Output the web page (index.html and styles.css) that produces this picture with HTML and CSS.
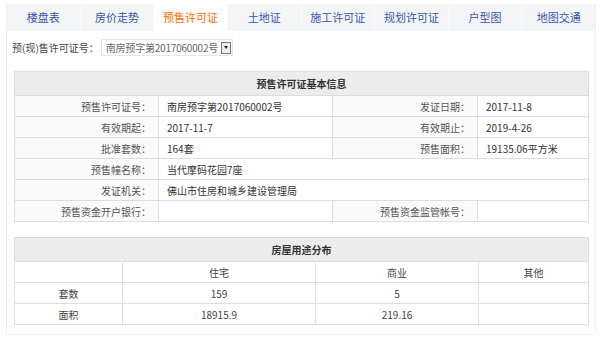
FILE: index.html
```html
<!DOCTYPE html>
<html>
    <head>
        <meta http-equiv="Content-type" content="text/html; charset=utf-8" />
        <link rel="stylesheet" href="styles.css">
        <title>预售许可证</title>
    </head>
    <body>
        <div class="box">
            <div class="tabs">
                <a class="tab">楼盘表</a>
                <a class="tab">房价走势</a>
                <a class="tab active">预售许可证</a>
                <a class="tab">土地证</a>
                <a class="tab">施工许可证</a>
                <a class="tab">规划许可证</a>
                <a class="tab">户型图</a>
                <a class="tab">地图交通</a>
            </div>
            <div class="content">
                <div class="filter">
                    <span class="filterLabel">预(现)售许可证号：</span>
                    <div class="select">
                        <span class="selectText">南房预字第2017060002号</span>
                        <span class="selectBtn"><i class="arrow"></i></span>
                    </div>
                </div>
                <table class="info">
                    <tr>
                        <th colspan="4">预售许可证基本信息</th>
                    </tr>
                    <tr>
                        <td class="lbl w1">预售许可证号：</td>
                        <td class="val w2">南房预字第2017060002号</td>
                        <td class="lbl w3">发证日期：</td>
                        <td class="val">2017-11-8</td>
                    </tr>
                    <tr>
                        <td class="lbl">有效期起：</td>
                        <td class="val">2017-11-7</td>
                        <td class="lbl">有效期止：</td>
                        <td class="val">2019-4-26</td>
                    </tr>
                    <tr>
                        <td class="lbl">批准套数：</td>
                        <td class="val">164套</td>
                        <td class="lbl">预售面积：</td>
                        <td class="val">19135.06平方米</td>
                    </tr>
                    <tr>
                        <td class="lbl">预售幢名称：</td>
                        <td class="val" colspan="3">当代摩码花园7座</td>
                    </tr>
                    <tr>
                        <td class="lbl">发证机关：</td>
                        <td class="val" colspan="3">佛山市住房和城乡建设管理局</td>
                    </tr>
                    <tr>
                        <td class="lbl">预售资金开户银行：</td>
                        <td class="val"></td>
                        <td class="lbl">预售资金监管帐号：</td>
                        <td class="val"></td>
                    </tr>
                </table>
                <table class="info usage">
                    <tr>
                        <th colspan="4">房屋用途分布</th>
                    </tr>
                    <tr>
                        <td class="u1"></td>
                        <td class="u2">住宅</td>
                        <td class="u3">商业</td>
                        <td>其他</td>
                    </tr>
                    <tr>
                        <td>套数</td>
                        <td>159</td>
                        <td>5</td>
                        <td></td>
                    </tr>
                    <tr>
                        <td>面积</td>
                        <td>18915.9</td>
                        <td>219.16</td>
                        <td></td>
                    </tr>
                </table>
            </div>
        </div>
    </body>
</html>
```

FILE: styles.css
```css
body, html {
    background-color: #fff;
    font-family: "Noto Sans CJK SC", "Noto Sans", sans-serif;
    font-size: 10px;
    color: #333;
    margin: 0px;
    padding: 0px;
}
.box {
    width: 588px;
    margin: 4px 0px 0px 6px;
    border: 1px solid #eee;
    border-top: none;
}
.tabs {
    display: flex;
    height: 27px;
    background-color: #f4f5f7;
}
.tab {
    flex: 1;
    text-align: center;
    line-height: 27px;
    font-size: 11px;
    color: #3a55b0;
    border-right: 1px solid #fafafa;
}
.tab:last-child {
    border-right: none;
}
.tab.active {
    background-color: #fff;
    color: #ff6a00;
}
.content {
    padding: 8px 6px 9px 5px;
}
.filter {
    display: flex;
    align-items: center;
    height: 17px;
}
.filterLabel {
    color: #444;
    font-size: 10px;
}
.select {
    display: flex;
    align-items: center;
    margin-left: 2px;
    height: 15px;
    border: 1px solid #e6e6e6;
    padding-left: 4px;
}
.selectText {
    font-size: 10px;
    color: #666;
    line-height: 15px;
    letter-spacing: -0.2px;
}
.selectBtn {
    display: flex;
    align-items: center;
    justify-content: center;
    width: 8px;
    height: 10px;
    margin: 0px 1px 0px 3px;
    border: 1px solid #777;
    background-color: #eee;
}
.arrow {
    width: 0px;
    height: 0px;
    border-left: 2px solid transparent;
    border-right: 2px solid transparent;
    border-top: 3px solid #222;
}
.info {
    width: 575px;
    margin-left: 2px;
    border-collapse: collapse;
    margin-top: 15px;
}
.info th {
    height: 21px;
    background-color: #ececec;
    border: 1px solid #ddd;
    font-weight: bold;
    font-size: 10px;
    color: #333;
}
.info td {
    height: 20px;
    border: 1px solid #ddd;
    padding: 0px;
    font-size: 10px;
}
.info td.lbl {
    text-align: right;
    padding-right: 7px;
    color: #555;
    background-color: #fafafa;
}
.info td.val {
    padding-left: 8px;
}
.w1 {
    width: 136px;
}
.w2 {
    width: 165px;
}
.w3 {
    width: 137px;
}
.usage {
    margin-top: 15px;
}
.usage td {
    text-align: center;
    color: #444;
}
.u1 {
    width: 107px;
}
.u2 {
    width: 192px;
}
.u3 {
    width: 162px;
}
```
